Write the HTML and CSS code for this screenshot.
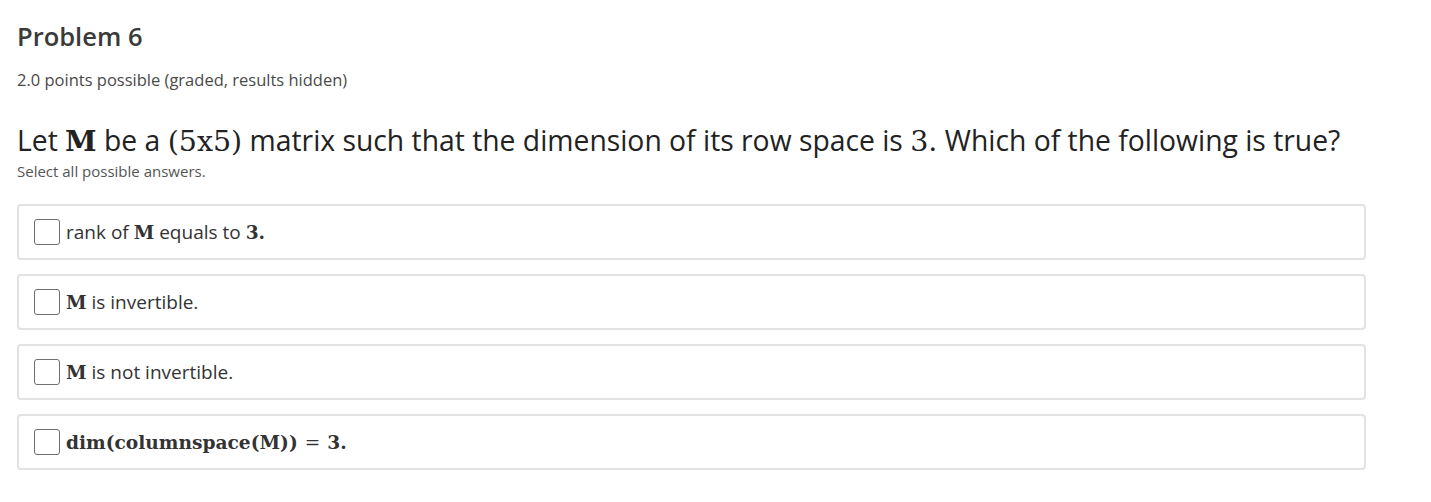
FILE: index.html
```html
<!DOCTYPE html>
<html>
<head>
<meta charset="utf-8">
<link rel="stylesheet" href="styles.css">
</head>
<body>
<div class="problem">
  <h3 class="title">Problem 6</h3>
  <div class="meta">2.0 points possible (graded, results hidden)</div>
  <p class="question">Let <span class="mb">M</span> be a <span class="m">(5x5)</span> matrix such that the dimension of its row space is <span class="m">3.</span> Which of the following is true?</p>
  <p class="hint">Select all possible answers.</p>
  <div class="choices">
    <label class="choice"><span class="box"></span><span class="ctext">rank of <span class="mb">M</span> equals to <span class="mb">3.</span></span></label>
    <label class="choice"><span class="box"></span><span class="ctext"><span class="mb">M</span> is invertible.</span></label>
    <label class="choice"><span class="box"></span><span class="ctext"><span class="mb">M</span> is not invertible.</span></label>
    <label class="choice"><span class="box"></span><span class="ctext"><span class="mb">dim(columnspace(M))</span><span class="eq">=</span><span class="mb">3.</span></span></label>
  </div>
</div>
</body>
</html>
```

FILE: styles.css
```css
body {
  margin: 0;
  background: #fff;
  font-family: "Open Sans", "Noto Sans", sans-serif;
  color: #313131;
}
.problem {
  padding: 18px 65px 0 17px;
}
.title {
  margin: 0;
  font-size: 25.5px;
  font-weight: 600;
  line-height: 36px;
  color: #3a3a3a;
}
.meta {
  margin-top: 15px;
  font-size: 16.5px;
  line-height: 22px;
  color: #4a4a4a;
}
.question {
  margin: 29px 0 0;
  font-size: 28.3px;
  line-height: 40px;
  color: #222;
}
.question .m,
.question .mb {
  font-size: 28.5px;
}
.mb {
  font-family: "DejaVu Serif", "Liberation Serif", serif;
  font-weight: 700;
}
.m {
  font-family: "DejaVu Serif", "Liberation Serif", serif;
}
.hint {
  margin: 0;
  font-size: 15px;
  line-height: 18px;
  color: #555;
}
.choices {
  margin-top: 24px;
  display: flex;
  flex-direction: column;
  gap: 14px;
}
.choice {
  display: flex;
  align-items: center;
  height: 52px;
  padding: 0 15px;
  border: 2px solid #e2e2e2;
  border-radius: 4px;
  font-size: 19px;
  color: #333;
}
.box {
  width: 24px;
  height: 24px;
  border: 1.5px solid #6f6f6f;
  border-radius: 3px;
  margin-right: 6px;
  flex: none;
}
.ctext {
  line-height: 24px;
}
.choice .mb {
  font-size: 18.6px;
}
.eq {
  font-family: "DejaVu Serif", "Liberation Serif", serif;
  margin: 0 7px;
  font-size: 18.6px;
}
```
